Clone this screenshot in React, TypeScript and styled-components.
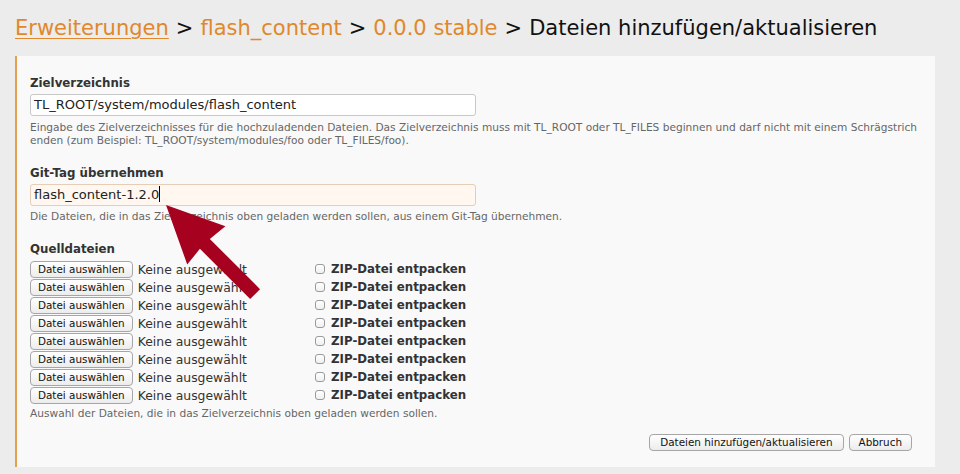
import React from "react";
import styled, { createGlobalStyle } from "styled-components";

const GlobalStyle = createGlobalStyle`
  body {
    margin: 0;
    background: #ececec;
    font-family: "DejaVu Sans", Verdana, sans-serif;
    color: #333;
  }
`;

const Page = styled.div`
  position: relative;
  width: 960px;
  height: 474px;
  overflow: hidden;
`;

const Title = styled.h1`
  margin: 0;
  padding: 15px 0 0 15px;
  height: 42px;
  box-sizing: border-box;
  font-size: 21px;
  font-weight: normal;
  line-height: 26px;
  color: #111;
  white-space: nowrap;
`;

const Crumb = styled.a<{ $link?: boolean }>`
  color: #e0882b;
  text-decoration: ${(p) => (p.$link ? "underline" : "none")};
  text-decoration-thickness: 1px;
  text-underline-offset: 3px;
`;

const Sep = styled.span`
  margin: 0 7px;
  color: #111;
`;

const Panel = styled.div`
  margin: 14px 0 0 15px;
  width: 920px;
  height: 411px;
  box-sizing: border-box;
  background: #f9f9f9;
  border-left: 2px solid #e3a04f;
  padding: 19px 23px 0 13px;
`;

const Field = styled.div`
  margin-bottom: 18px;
`;

const Label = styled.div`
  font-size: 11.8px;
  font-weight: bold;
  line-height: 16px;
  color: #333;
  margin-bottom: 3px;
`;

const TextInput = styled.div<{ $focus?: boolean }>`
  width: 446px;
  height: 22px;
  box-sizing: border-box;
  border: 1px solid ${(p) => (p.$focus ? "#e6cdb6" : "#c8c8c8")};
  border-radius: 3px;
  background: ${(p) => (p.$focus ? "#fff7f0" : "#fff")};
  padding: 0 3px;
  font-size: 13px;
  line-height: 20px;
  color: #222;
  white-space: nowrap;
`;

const Caret = styled.span`
  display: inline-block;
  width: 1px;
  height: 16px;
  background: #000;
  vertical-align: -3px;
`;

const Help = styled.div<{ $top?: number }>`
  margin-top: ${(p) => p.$top ?? 4}px;
  font-size: 10.6px;
  line-height: 13px;
  color: #666;
  white-space: nowrap;
`;

const FileRow = styled.div`
  display: flex;
  align-items: center;
  height: 18px;
`;

const FileBox = styled.div`
  width: 285px;
  display: flex;
  align-items: center;
  gap: 5px;
`;

const Button = styled.button<{ $pad?: number }>`
  height: 17px;
  padding: 0 ${(p) => p.$pad ?? 7}px;
  border: 1px solid #a6a6a6;
  border-radius: 4px;
  background: linear-gradient(#ffffff, #ececec);
  font-family: "DejaVu Sans", Verdana, sans-serif;
  font-size: 10.4px;
  line-height: 15px;
  color: #111;
  white-space: nowrap;
`;

const NoneText = styled.span`
  font-size: 12.4px;
  color: #333;
`;

const Check = styled.span`
  width: 10px;
  height: 10px;
  box-sizing: border-box;
  border: 1px solid #9a9a9a;
  border-radius: 3px;
  background: linear-gradient(#fff, #f0f0f0);
  margin-right: 6px;
`;

const CheckLabel = styled.span`
  font-size: 11.8px;
  font-weight: bold;
  color: #333;
`;

const Actions = styled.div`
  display: flex;
  justify-content: flex-end;
  gap: 5px;
  margin-top: 14px;
`;

const Arrow = styled.svg`
  position: absolute;
  left: 0;
  top: 0;
  pointer-events: none;
`;

const ROWS = 8;

export default function App() {
  return (
    <Page>
      <GlobalStyle />
      <Title>
        <Crumb $link>Erweiterungen</Crumb>
        <Sep>&gt;</Sep>
        <Crumb>flash_content</Crumb>
        <Sep>&gt;</Sep>
        <Crumb>0.0.0 stable</Crumb>
        <Sep>&gt;</Sep>
        Dateien hinzufügen/aktualisieren
      </Title>
      <Panel>
        <Field>
          <Label>Zielverzeichnis</Label>
          <TextInput>TL_ROOT/system/modules/flash_content</TextInput>
          <Help $top={5}>
            Eingabe des Zielverzeichnisses für die hochzuladenden Dateien. Das Zielverzeichnis muss mit TL_ROOT oder TL_FILES beginnen und darf nicht mit einem Schrägstrich
            <br />
            enden (zum Beispiel: TL_ROOT/system/modules/foo oder TL_FILES/foo).
          </Help>
        </Field>
        <Field>
          <Label>Git-Tag übernehmen</Label>
          <TextInput $focus>
            flash_content-1.2.0
            <Caret />
          </TextInput>
          <Help>Die Dateien, die in das Zielverzeichnis oben geladen werden sollen, aus einem Git-Tag übernehmen.</Help>
        </Field>
        <div>
          <Label>Quelldateien</Label>
          {Array.from({ length: ROWS }).map((_, i) => (
            <FileRow key={i}>
              <FileBox>
                <Button>Datei auswählen</Button>
                <NoneText>Keine ausgewählt</NoneText>
              </FileBox>
              <Check />
              <CheckLabel>ZIP-Datei entpacken</CheckLabel>
            </FileRow>
          ))}
          <Help $top={3}>Auswahl der Dateien, die in das Zielverzeichnis oben geladen werden sollen.</Help>
        </div>
        <Actions>
          <Button $pad={10}>Dateien hinzufügen/aktualisieren</Button>
          <Button $pad={9}>Abbruch</Button>
        </Actions>
      </Panel>
      <Arrow width="960" height="474">
        <g transform="translate(166 205) rotate(45)">
          <polygon
            points="0,0 57,-27 55,-7 126,-7 126,7 55,7 57,27"
            fill="#a6021f"
          />
        </g>
      </Arrow>
    </Page>
  );
}
